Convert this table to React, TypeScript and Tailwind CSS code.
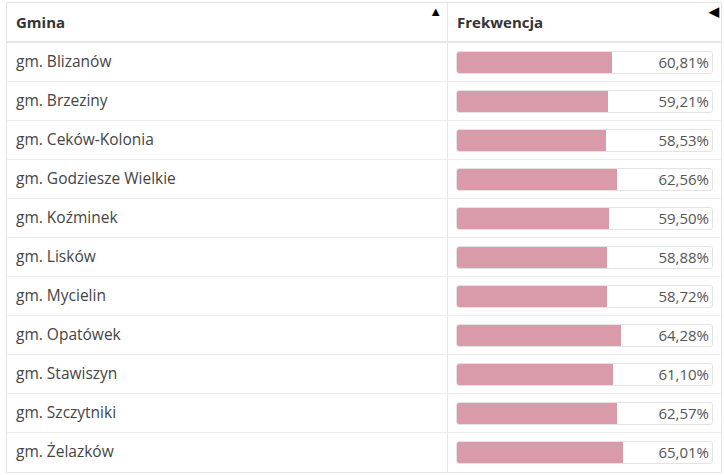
const ROWS: Array<{ name: string; pct: number }> = [
  { name: 'gm. Blizanów', pct: 60.81 },
  { name: 'gm. Brzeziny', pct: 59.21 },
  { name: 'gm. Ceków-Kolonia', pct: 58.53 },
  { name: 'gm. Godziesze Wielkie', pct: 62.56 },
  { name: 'gm. Koźminek', pct: 59.5 },
  { name: 'gm. Lisków', pct: 58.88 },
  { name: 'gm. Mycielin', pct: 58.72 },
  { name: 'gm. Opatówek', pct: 64.28 },
  { name: 'gm. Stawiszyn', pct: 61.1 },
  { name: 'gm. Szczytniki', pct: 62.57 },
  { name: 'gm. Żelazków', pct: 65.01 },
];

function formatPct(v: number) {
  return v.toFixed(2).replace('.', ',') + '%';
}

export default function App() {
  return (
    <div className="h-[475px] w-[724px] bg-white pl-[6px] pt-[2px] font-['Open_Sans',sans-serif]">
      <div className="w-[716px] border border-[#e6e6e6]">
        <div className="grid h-[40px] grid-cols-[441px_1fr] border-b-2 border-[#e6e6e6]">
          <div className="relative flex items-center border-r border-[#e6e6e6] pl-[9px] text-[15px] font-bold text-[#333]">
            Gmina
            <span className="absolute right-[5px] top-[2px] text-[13px] leading-none text-black">▲</span>
          </div>
          <div className="relative flex items-center pl-[9px] text-[15px] font-bold text-[#333]">
            Frekwencja
            <span className="absolute right-[2px] top-[2px] text-[13px] leading-none text-black">◀</span>
          </div>
        </div>
        {ROWS.map((r, i) => (
          <div
            key={r.name}
            className={`grid h-[39px] grid-cols-[441px_1fr] ${i < ROWS.length - 1 ? 'border-b border-[#ececec]' : ''}`}
          >
            <div className="flex items-center border-r border-[#e6e6e6] pb-[1px] pl-[9px] text-[15.5px] text-[#444]">
              {r.name}
            </div>
            <div className="flex items-center px-[8px]">
              <div className="relative h-[23px] w-full overflow-hidden rounded-[3px] border border-[#e3e3e3] bg-white">
                <div
                  className="absolute inset-y-0 left-0 bg-[#d99aa9]"
                  style={{ width: `${r.pct}%` }}
                />
                <span className="absolute right-[3px] top-0 flex h-full items-center text-[15px] text-[#555]">
                  {formatPct(r.pct)}
                </span>
              </div>
            </div>
          </div>
        ))}
      </div>
    </div>
  );
}
